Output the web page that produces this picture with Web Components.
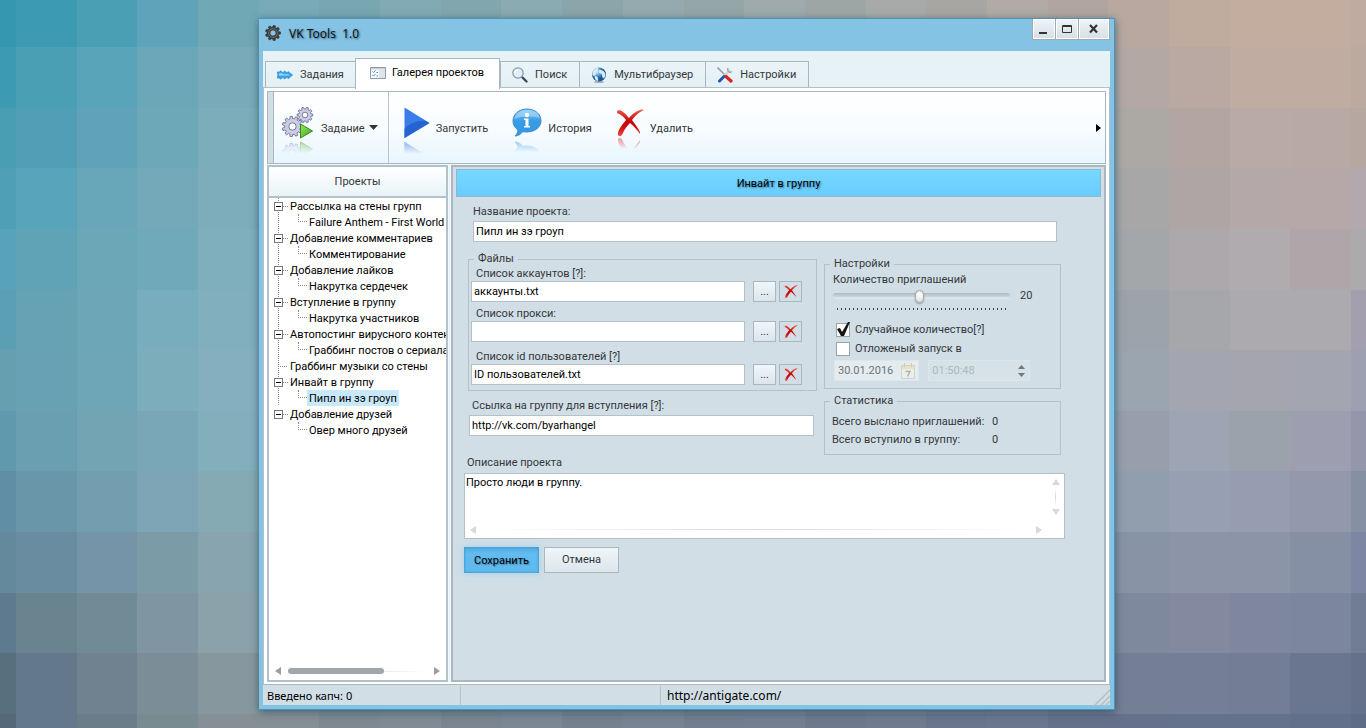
<!DOCTYPE html>
<html lang="ru">
<head>
<meta charset="utf-8">
<title>VK Tools 1.0</title>
<style>
  html, body { margin: 0; height: 100%; }
  body {
    font: 11px/16px Roboto, "Liberation Sans", sans-serif;
    color: #34373a;
    background: #6f8c98;
  }
</style>
</head>
<body>
<desk-top>
  <app-window heading="VK Tools&nbsp; 1.0">
    <tab-bar slot="tabs">
      <tab-item icon="arrows">Задания</tab-item>
      <tab-item icon="list" active>Галерея проектов</tab-item>
      <tab-item icon="lens">Поиск</tab-item>
      <tab-item icon="globe">Мультибраузер</tab-item>
      <tab-item icon="tools">Настройки</tab-item>
    </tab-bar>
    <tool-bar>
      <tool-button icon="gears" menu>Задание</tool-button>
      <tool-button icon="play">Запустить</tool-button>
      <tool-button icon="info">История</tool-button>
      <tool-button icon="cross">Удалить</tool-button>
    </tool-bar>
    <split-view>
      <project-tree slot="side"></project-tree>
      <project-form></project-form>
    </split-view>
    <status-bar slot="status"></status-bar>
  </app-window>
</desk-top>

<script>
const define = (name, html, setup) => {
  const template = document.createElement('template');
  template.innerHTML = html;
  customElements.define(name, class extends HTMLElement {
    constructor() {
      super();
      this.attachShadow({ mode: 'open' }).append(template.content.cloneNode(true));
    }
    connectedCallback() {
      if (setup && !this.ready) { this.ready = true; setup(this, this.shadowRoot); }
    }
  });
};

/* ---------- icons ---------- */
const gearPath = (cx, cy, r, n, hole = .36) => {
  let d = '';
  for (let i = 0; i < n; i++) {
    const a = i * 2 * Math.PI / n, s = Math.PI / n;
    [[-.62, .78], [-.4, 1], [.4, 1], [.62, .78]].forEach(([k, m], j) => {
      d += (i + j ? 'L' : 'M') + (cx + r * m * Math.cos(a + k * s)).toFixed(2) + ' ' + (cy + r * m * Math.sin(a + k * s)).toFixed(2);
    });
  }
  const h = r * hole;
  return d + `ZM${cx - h} ${cy}a${h} ${h} 0 1 0 ${2 * h} 0a${h} ${h} 0 1 0 ${-2 * h} 0Z`;
};
const icons = {
  gear: ['0 0 16 16', `<path fill="#3e3e3e" stroke="#2c2c2c" stroke-width=".6" fill-rule="evenodd" d="${gearPath(8, 8, 7.6, 9, .4)}"/><circle cx="8" cy="8" r="4.400" fill="none" stroke="#6d6d6d"/>`],
  arrows: ['0 0 16 10', `<path fill="#3ba4e6" stroke="#1f86cc" stroke-width=".6" d="M0 2h3V.8L7 3V1l4 2V1.600L15.700 5 11 8.800V7L7 9V7L3 9.200V8H0l1-3Z"/><path fill="#8fdcff" d="M2 3.200h3l2 1.300 3-.5 3 1-3 .6H2Z"/>`],
  list: ['0 0 16 12', `<path fill="#f6f9fb" stroke="#8f9ba3" d="M.5.5h15v11H.5Z"/><path fill="#c5d0d8" d="M1 1h14v1.500H1Z"/><path fill="#dde5eb" d="M9 3h6v8H9Z"/><path stroke="#3d92c8" fill="none" d="M2.500 4.500l1 1 2-2M2.500 8l1 1 2-2M6.500 5.500h1.500M6.500 9h1.500"/>`],
  lens: ['0 0 16 16', `<path stroke="#3d4a55" stroke-width="2.400" stroke-linecap="round" d="M10.500 10.500l4 4"/><circle cx="6" cy="6" r="5.200" fill="#dfeefa" stroke="#8a97a6" stroke-width="1.200"/><path d="M3 6a3 3 0 0 1 3-3" stroke="#fff" stroke-width="1.500" fill="none"/>`],
  globe: ['0 0 16 16', `<defs><radialGradient id="g" cx=".35" cy=".3"><stop offset="0" stop-color="#d8f2ff"/><stop offset=".5" stop-color="#55abe0"/><stop offset="1" stop-color="#16599c"/></radialGradient></defs><ellipse cx="8" cy="15" rx="5" ry="1" fill="#aab"/><circle cx="8" cy="7.500" r="7" fill="url(#g)"/><path fill="#dfe7ea" d="M1.500 5c1-2 3-4 5.500-4 1 2-1 3-2 4s1 2-1 3.500-3-1.500-2.500-3.500ZM9 3c2 0 4 1 5 3s0 4-1 5-2-1-2-3-3-1-3-3 0-2 1-2ZM4 9c2 0 4 2 3 5-2 0-4-3-3-5Z"/>`],
  tools: ['0 0 16 16', `<path stroke="#97a0a8" stroke-width="1.600" fill="none" d="M.5.5l8 8"/><path stroke="#cfd6dc" stroke-width="2.400" d="M13 2.500L7.500 9"/><path fill="none" stroke="#9aa4ac" stroke-width="1.300" d="M11 1c-1 2 0 4 2 4.500l2-1"/><path stroke="#1d56b8" stroke-width="3" stroke-linecap="round" d="M7 9.500l-4.500 4.500"/><path stroke="#d8261c" stroke-width="3.200" stroke-linecap="round" d="M9 9.500l5 4.500"/>`],
  gears: ['0 0 32 32', `<g stroke="#6d7192" stroke-width=".9" fill="#c9cce2" fill-rule="evenodd"><path d="${gearPath(23, 8, 7.800, 10)}"/><path d="${gearPath(10.500, 19.500, 10.200, 11)}"/></g><defs><linearGradient id="p" x1="0" y1="0" x2="1" y2="1"><stop offset="0" stop-color="#9be85e"/><stop offset="1" stop-color="#2fa81c"/></linearGradient></defs><path fill="url(#p)" stroke="#37891f" d="M18.500 17v14L30.500 24Z"/>`],
  play: ['0 0 26 32', `<path fill="#3b7de8" d="M.5.5V31L25.500 16Z"/><path fill="#2563cf" d="M.5 31V22C6 16 14 13 22 14l3.500 2Z"/>`],
  info: ['0 0 30 30', `<defs><linearGradient id="i" x1="0" y1="0" x2="0" y2="1"><stop offset="0" stop-color="#86c8f4"/><stop offset=".45" stop-color="#3b9be4"/><stop offset="1" stop-color="#2c9ae8"/></linearGradient></defs><path fill="url(#i)" stroke="#3f8dcb" d="M15 1c8 0 14 5 14 12 0 6-6 11-14 11-2 0-3 0-4-.500C9 26 6 28 3 28c2-2 3-4 3-6-3-2-5-5-5-9C1 6 7 1 15 1Z"/><path fill="#a8daf9" opacity=".65" d="M15 2c7 0 12 3 12.500 8-6-2-18-2-25 1C3 6 8 2 15 2Z"/><circle cx="15" cy="7" r="2.200" fill="#fff"/><path fill="#fff" d="M12 10.500h4.500V18H18v1.500h-6V18h1.500v-6H12Z"/>`],
  cross: ['0 0 28 27', `<defs><linearGradient id="r" x1="0" y1="0" x2="0" y2="1"><stop offset="0" stop-color="#f0564a"/><stop offset=".45" stop-color="#c80808"/><stop offset=".7" stop-color="#d01010"/><stop offset="1" stop-color="#f04a3c"/></linearGradient></defs>
    <path fill="url(#r)" d="M1 2.500C2 .5 5 1 7 3c3 2 4 4 6 6 3-4 8-7.500 13-8.500l2 .5c-5 2-9 6-12 10 3 4 6 8 8 12l0 2c-3-4-6-8-10-11-3 3-6 7-7 10-1 4-6 4-5 0 1-5 5-9 8-13C7 7 4 5 1 4Z"/>`],
  calendar: ['0 0 14 16', `<g opacity=".8"><path fill="#eef0e6" stroke="#c6ccc8" d="M.5 2.500h13v13H.5Z"/><path fill="#ecdfae" d="M1 3h12v3H1Z"/><path stroke="#c3c6b8" d="M3.500 0v4M10.500 0v4"/><path fill="none" stroke="#9aa4a9" stroke-width="1.400" d="M4.500 8.500h4.500l-2.500 5"/></g>`]
};
customElements.define('app-icon', class extends HTMLElement {
  constructor() { super(); this.attachShadow({ mode: 'open' }); }
  static get observedAttributes() { return ['name']; }
  attributeChangedCallback() { this.draw(); }
  draw() {
    const icon = icons[this.getAttribute('name')];
    if (!icon) return;
    const [box, art] = icon;
    const [, , w, h] = box.split(' ');
    this.shadowRoot.innerHTML = `<style>:host{display:block;flex:none} svg{display:block}</style>
      <svg viewBox="${box}" width="${this.getAttribute('w') || w}" height="${this.getAttribute('h') || h}" aria-hidden="true">${art}</svg>`;
  }
});

/* ---------- desktop: wallpaper mosaic ---------- */
define('desk-top', `<style>
  :host { display: grid; min-height: 100vh; }
  .mosaic, main { grid-area: 1 / 1; min-width: 0; }
  .mosaic { display: grid; overflow: hidden;
    grid-template-columns: 16px repeat(22, 1fr) 15px;
    grid-template-rows: 47px repeat(11, 1fr) 14px; }
  main { display: grid; z-index: 1; padding: 18px 251px 18px 259px; }
</style>
<div class="mosaic" aria-hidden="true"></div><main><slot></slot></main>`, (host, root) => {
  const left = [
    '3597b0 3c9bb3 4b9fb4 5fa3bb 71a8b6', '3c9ab2 4a9fb4 59a4b9 69a7b9 78aaba',
    '4a9eb4 509fb7 60a3b8 6ca8b8 7cadbb', '4f9fb7 58a4ba 67a7b9 73a9b8 7dacba',
    '58a3bb 60a3b7 6aa7b7 70aaba 7fafbd', '5a9fb3 65a3b4 6ca6b7 78adbd 82afbe',
    '669fb0 67a1b3 6ea6b7 7cadba 85afbe', '6098ad 6a9fb1 73a4b4 79a7b7 83afbd',
    '5f8ea5 6996a8 739eb0 7da5b6 86aab4', '64899c 698ca0 7594a8 7b9ba7 87a4af',
    '5e7a8e 69848f 708b96 7f95a2 8ba2ab', '58707e 63788a 70828f 7b8e97 87979e',
    '54687a 63788a 6b7d88 788b90 858f95'];
  const right = [
    'b8a8a0 c0ab9f c2ad9f c2ad9f bfab9f', 'b3a8a4 b9a9a2 c0aca1 c0aca1 bca99f',
    'aca8a4 b3a5a2 b9aaa7 b9a9a5 b6a7a1', 'a7a7a7 aea5a4 b4a8a8 b6a8a8 b3a8ad',
    'a3a7aa ada8ac afabae b0a6aa adaaae', '9da3ab a6a7ab acaaaf acaaaf a39fae',
    '9aa5af a3a6b0 a5a5b0 a3a5b0 9da0b1', '989eac 9da4b3 9ca2ac 9d9fb0 9497ab',
    '919eae 979fb3 969db1 9398ad 8690a5', '8993a6 8c94a7 8c94a7 8690a5 7d86a3',
    '7f899d 838a9f 7f869f 7d869f 717c95', '747e95 747e96 737d96 6a7690 65718b',
    '65718c 65728c 65728c 63708b 5f6c86'];
  const rgb = h => [0, 2, 4].map(i => parseInt(h.slice(i, i + 2), 16));
  const mosaic = root.querySelector('.mosaic');
  left.forEach((row, y) => {
    const l = row.split(' ').map(rgb), r = right[y].split(' ').map(rgb);
    for (let x = 0; x < 24; x++) {
      const t = (x - 4) / 15;
      const c = x < 5 ? l[x] : x > 18 ? r[x - 19] : l[4].map((v, i) => Math.round(v + (r[0][i] - v) * t + (x % 2 ? 2 : -2)));
      const cell = document.createElement('i');
      cell.style.background = `rgb(${c})`;
      mosaic.append(cell);
    }
  });
});

/* ---------- window frame ---------- */
define('app-window', `<style>
  :host { display: flex; flex-direction: column; min-width: 0; background: #84c3e4;
    border: 1px solid #4c93b5; border-width: 1px 1px 1px 0; box-sizing: border-box;
    box-shadow: 0 2px 8px rgba(30, 70, 90, .7); padding: 0 4px 4px 4px; }
  header { display: flex; align-items: flex-start; height: 32px; }
  app-icon { margin: 6px 8px 0 2px; }
  h1 { flex: 1; margin: 7px 0 0; font: 12px/16px "Noto Sans", "Open Sans", sans-serif; color: #101418;
    text-shadow: 1px 1px 2px rgba(20, 50, 70, .7); }
  nav { display: flex; gap: 1px; background: #9fa9ae; border: 1px solid #9fa9ae; border-top: 0; }
  button { display: grid; place-items: center; width: 22px; height: 20px; padding: 0; border: 1px solid #fff;
    background: linear-gradient(#eef4f7, #d6e0e6); }
  button.close { width: 30px; }
  .body { flex: 1; display: flex; flex-direction: column; min-height: 0; background: #e6f2f6; }
  .page { flex: 1; display: flex; flex-direction: column; min-height: 0;
    background: #fff; border: 1px solid #b3c1c8; border-top: 0; border-bottom-color: #a9b8c0; padding: 3px 3px 2px 3px; }
</style>
<header><app-icon name="gear"></app-icon><h1></h1>
  <nav>
    <button aria-label="Свернуть"><svg width="12" height="12"><path fill="#333" d="M1 9h8v2H1Z"/></svg></button>
    <button aria-label="Развернуть"><svg width="12" height="12"><path fill="none" stroke="#333" d="M1.500 2.500h9v7h-9ZM1 3.500h10"/></svg></button>
    <button class="close" aria-label="Закрыть"><svg width="12" height="12"><path stroke="#333" stroke-width="2.200" d="M2 2l7 7.500M9 2L2 9.500"/></svg></button>
  </nav>
</header>
<div class="body"><slot name="tabs"></slot><div class="page"><slot></slot></div><slot name="status"></slot></div>`,
  (host, root) => { root.querySelector('h1').textContent = host.getAttribute('heading'); });

/* ---------- tabs ---------- */
define('tab-bar', `<style>
  :host { display: flex; align-items: flex-end; height: 36px; padding: 0 2px; border-bottom: 1px solid #b3c1c8; z-index: 1; }
</style><slot></slot>`);
define('tab-item', `<style>
  :host { display: block; }
  button { display: flex; align-items: center; gap: 7px; height: 26px; padding: 0 12px 0 11px; font: inherit; color: #34373a;
    border: 1px solid #a9b8c0; border-bottom: 0; border-right-width: 0; background: linear-gradient(#eaf4f8, #e4f0f5); }
  :host(:first-child) button { padding: 0 11px; }
  :host(:last-child) button { border-right-width: 1px; }
  :host([active]) { position: relative; margin-bottom: -2px; }
  :host([active]) button { height: 31px; padding: 0 15px 3px 14px; gap: 6px; color: #000; background: #fff; border-right-width: 1px; }
</style><button><app-icon></app-icon><slot></slot></button>`,
  (host, root) => root.querySelector('app-icon').setAttribute('name', host.getAttribute('icon')));

/* ---------- toolbar ---------- */
define('tool-bar', `<style>
  :host { display: flex; height: 71px; border: 1px solid #a9b8c0; background: linear-gradient(#fff, #f8fcff 50%, #e8f6fe); }
  .grip { width: 5px; background: #d1dee6; border-right: 1px solid #a9b8c0; }
  .items { flex: 1; display: flex; }
  button { align-self: center; border: 0; background: none; padding: 4px; }
  svg { display: block; }
</style>
<div class="grip"></div><div class="items"><slot></slot></div>
<button aria-label="Ещё"><svg width="5" height="8"><path d="M0 0v8L5 4Z"/></svg></button>`);
define('tool-button', `<style>
  :host { display: flex; }
  :host([menu]) { border-right: 1px solid #b9c6cc; }
  button { display: flex; align-items: center; font: inherit; color: #34373a; border: 0; background: none; padding: 0 10px 0 8px; }
  app-icon { -webkit-box-reflect: below 2px linear-gradient(transparent 60%, rgba(0, 0, 0, .5)); margin-bottom: 10px; }
  :host(:not([menu])) button { padding: 0 9px 0 15px; }
  span { padding: 2px 0 0 7px; }
  :host(:not([menu])) span { padding-left: 6px; }
  .menu { margin: 0 0 0 4px; display: none; }
  :host([menu]) .menu { display: block; }
</style><button><app-icon></app-icon><span><slot></slot></span><svg class="menu" width="9" height="5"><path fill="#333" d="M0 0h9L4.500 5Z"/></svg></button>`,
  (host, root) => root.querySelector('app-icon').setAttribute('name', host.getAttribute('icon')));

/* ---------- two panes ---------- */
define('split-view', `<style>
  :host { flex: 1; display: flex; gap: 3px; min-height: 0; padding-top: 1px; background: #eef7fb; }
  .side { flex: none; display: flex; width: 181px; }
  .main { flex: 1; display: flex; min-width: 0; }
</style><div class="side"><slot name="side"></slot></div><div class="main"><slot></slot></div>`);

define('h-scroll', `<style>
  :host { display: flex; align-items: center; gap: 7px; }
  i { border: 4px solid transparent; }
  .l { border-right: 6px solid #9a9fa1; border-left: 0; }
  .r { border-left: 6px solid #9a9fa1; border-right: 0; }
  .track { flex: 1; height: 1px; background: linear-gradient(90deg, transparent, #d8dcdd, transparent); }
  .thumb { width: 69%; height: 6px; margin-top: -3px; border-radius: 3px; background: #a2a7a9; }
  :host([idle]) i { opacity: .4; }
  :host([idle]) .thumb { display: none; }
</style><i class="l"></i><div class="track"><div class="thumb"></div></div><i class="r"></i>`);

/* ---------- project tree ---------- */
define('project-tree', `<style>
  :host { flex: 1; display: flex; flex-direction: column; min-width: 0; border: 2px solid #b3c1c8; box-sizing: border-box; background: #fff; }
  h2 { margin: 0; font: inherit; text-align: center; line-height: 29px; background: linear-gradient(#fff, #e9f4f8); border-bottom: 2px solid #b3c1c8; }
  ul { list-style: none; margin: 0; padding: 0; }
  .tree { flex: 1; padding: 0 0 0 5px; overflow: hidden; color: #000; white-space: nowrap; }
  .tree > li { background: linear-gradient(#888 50%, transparent 50%) 4px 0 / 1px 2px repeat-y; }
  .tree > li:last-child { background: none; }
  .row { display: flex; align-items: center; height: 16px; }
  .row > * { flex: none; }
  .row button { width: 9px; height: 9px; padding: 0; border: 1px solid #777; background: linear-gradient(#000, #000) center / 5px 1px no-repeat #fff; }
  .row i, .leaf::before { content: ""; flex: none; height: 1px; width: 5px; background: repeating-linear-gradient(90deg, #888 0 1px, transparent 1px 2px); }
  .leaf::before { width: 10px; margin-left: 4px; }
  li li .row::before { content: ""; flex: none; width: 9px; height: 8px; margin: 0 0 8px 24px; box-sizing: border-box; border: dotted #888; border-width: 0 0 1px 1px; }
  a { color: inherit; text-decoration: none; padding: 1px 2px 0; line-height: 15px; }
  a[aria-current] { background: #c8e9fb; }
  h-scroll { height: 16px; padding: 0 6px 1px; }
</style>
<h2>Проекты</h2><ul class="tree"></ul><h-scroll></h-scroll>`, (host, root) => {
  const data = [
    ['Рассылка на стены групп', 'Failure Anthem - First World F'],
    ['Добавление комментариев', 'Комментирование'],
    ['Добавление лайков', 'Накрутка сердечек'],
    ['Вступление в группу', 'Накрутка участников'],
    ['Автопостинг вирусного контен', 'Граббинг постов о сериала'],
    ['Граббинг музыки со стены'],
    ['Инвайт в группу', 'Пипл ин зэ гроуп'],
    ['Добавление друзей', 'Овер много друзей']];
  root.querySelector('.tree').innerHTML = data.map(([name, child]) => child
    ? `<li><div class="row"><button aria-label="Свернуть ветку"></button><i></i><a href="#">${name}</a></div>
       <ul><li><div class="row"><a href="#"${child.startsWith('Пипл') ? ' aria-current="true"' : ''}>${child}</a></div></li></ul></li>`
    : `<li><div class="row leaf"><a href="#">${name}</a></div></li>`).join('');
});

/* ---------- form parts ---------- */
const fieldCss = `
  input { box-sizing: border-box; width: 100%; height: 21px; margin: 0; padding: 0 2px; font: inherit; color: #000; border: 1px solid #b3c1c8; background: #fff; border-radius: 0; }
  label { display: block; line-height: 15px; }`;
define('text-field', `<style>${fieldCss} :host { display: block; } label { margin-bottom: 2px; padding-left: var(--label-indent, 3px); }</style>
<label for="f"></label><input id="f">`, (host, root) => {
  root.querySelector('label').textContent = host.getAttribute('label');
  root.querySelector('input').value = host.getAttribute('value');
});
define('file-field', `<style>${fieldCss}
  :host { display: block; }
  label { padding-left: 5px; }
  div { display: flex; gap: 3px; }
  input { flex: 1; margin-right: 5px; min-width: 0; }
  button { display: grid; place-items: center; box-sizing: border-box; width: 23px; height: 21px; padding: 0; font: inherit; color: #333;
    border: 1px solid #a9b8c0; background: linear-gradient(#f0f7fa, #dbe5ec); }
  button.clear { background: none; }
</style>
<label for="f"></label><div><input id="f"><button aria-label="Обзор">...</button><button class="clear" aria-label="Очистить"><app-icon name="cross" w="14" h="13"></app-icon></button></div>`, (host, root) => {
  root.querySelector('label').textContent = host.getAttribute('label');
  root.querySelector('input').value = host.getAttribute('value');
});
define('group-box', `<style>
  :host { display: block; min-width: 0; }
  fieldset { margin: 0; min-width: 0; box-sizing: border-box; padding: 0; border: 1px solid #b3c1c8; }
  legend { margin-left: 5px; padding: 0 4px; line-height: 14px; }
</style><fieldset><legend></legend><slot></slot></fieldset>`, (host, root) => {
  root.querySelector('legend').textContent = host.getAttribute('label');
});
define('count-slider', `<style>
  :host { display: grid; grid-template-columns: 1fr 44px; padding: 1px 6px 0 8px; }
  label { grid-column: 1 / 3; line-height: 15px; }
  input { appearance: none; width: 100%; height: 18px; margin: 0; background: none; }
  input::-webkit-slider-runnable-track { height: 6px; border-radius: 3px; background: linear-gradient(#adb9bf, #c5d1d7 50%, #e6eef2); }
  input::-webkit-slider-thumb { appearance: none; width: 9px; height: 13px; margin-top: -3px; border-radius: 5px; border: 1px solid #a6aaab; background: radial-gradient(circle at 50% 35%, #fff, #d6d8d8); box-shadow: 0 1px 2px rgba(0,0,0,.3); }
  output { padding-left: 10px; line-height: 17px; }
  .ticks { height: 2px; margin: 3px 2px 1px 4px; background: repeating-linear-gradient(90deg, #444 0 1px, transparent 1px 4px); }
</style><label for="s">Количество приглашений</label><input id="s" type="range" min="0" max="41" value="20"><output for="s">20</output><div class="ticks"></div>`);
define('tick-box', `<style>
  :host { display: flex; align-items: center; height: 19px; padding-left: 11px; }
  input { appearance: none; width: 14px; height: 14px; margin: 0 5px 0 0; border: 1px solid #98a4aa; background: #fff; box-sizing: border-box; flex: none; }
  span { position: relative; display: flex; }
  svg { position: absolute; left: 0; bottom: 0; display: none; pointer-events: none; }
  input:checked + svg { display: block; }
</style><span><input id="c" type="checkbox"><svg width="15" height="15"><path fill="#151515" d="M1 7l3-1 2 4L12 0h2L8 14H5Z"/></svg></span><label for="c"></label>`, (host, root) => {
  root.querySelector('label').textContent = host.getAttribute('label');
  root.querySelector('input').checked = host.hasAttribute('checked');
});
define('start-time', `<style>
  :host { display: flex; gap: 9px; padding: 2px 30px 7px 9px; }
  div { display: flex; align-items: center; box-sizing: border-box; height: 21px; border: 1px solid #dde6eb; background: #d6e1e8; padding: 0 3px; }
  .date { flex: 85; min-width: 0; background: #e4ecf0; } .time { flex: 103; min-width: 0; }
  input { flex: 1; min-width: 0; width: 0; padding: 0; border: 0; background: none; font: inherit; color: #6b7479; }
  .time input { color: #a9bbbb; }
  button { display: grid; gap: 4px; border: 0; padding: 0; background: none; }
  svg { display: block; }
</style>
<div class="date"><input aria-label="Дата запуска" value="30.01.2016" disabled><button aria-label="Календарь" disabled><app-icon name="calendar"></app-icon></button></div>
<div class="time"><input aria-label="Время запуска" value="01:50:48" disabled><button aria-label="Изменить время" disabled><svg width="9" height="14"><path fill="#70787b" d="M1 5h7L4.500 1ZM1 9h7L4.500 13Z"/></svg></button></div>`);
define('stat-list', `<style>
  :host { display: block; padding: 5px 6px 5px 7px; }
  table { border-spacing: 0; } th, td { font-weight: inherit; text-align: left; line-height: 18px; padding: 0; } th { min-width: 160px; }
</style><table><tr><th scope="row">Всего выслано приглашений:</th><td>0</td></tr><tr><th scope="row">Всего вступило в группу:</th><td>0</td></tr></table>`);
define('memo-field', `<style>
  :host { display: block; }
  label { display: block; padding-left: 3px; line-height: 16px; margin-bottom: 2px; }
  .box { display: grid; grid-template: 1fr 17px / 1fr 17px; height: 66px; box-sizing: border-box; border: 1px solid #b3c1c8; background: #fff; }
  textarea { resize: none; border: 0; padding: 1px 1px 0; margin: 0; font: inherit; color: #000; background: none; overflow: hidden; }
  h-scroll { padding: 0 5px; grid-area: 2 / 1; }
  .v { display: flex; flex-direction: column; align-items: center; gap: 3px; padding-top: 5px; opacity: .4; }
  .v i { border: 4px solid transparent; }
  .v .u { border-bottom: 6px solid #9a9fa1; border-top: 0; } .v .d { border-top: 6px solid #9a9fa1; border-bottom: 0; }
  .v b { width: 1px; height: 18px; background: linear-gradient(transparent, #9a9fa1, transparent); }
</style><label for="m">Описание проекта</label>
<div class="box"><textarea id="m">Просто люди в группу.</textarea><div class="v"><i class="u"></i><b></b><i class="d"></i></div><h-scroll idle></h-scroll></div>`);
define('push-button', `<style>
  :host { display: block; }
  button { box-sizing: border-box; width: 75px; height: 26px; padding: 0; font: inherit; color: #34373a; border: 1px solid #a9b8c0; background: linear-gradient(#eef6f9, #dde6ed); }
  :host([primary]) button { color: #000; border: 0; background: linear-gradient(#4fa6dc, #62bcef 25%, #5fb9ec); padding-top: 2px; text-shadow: 1px 1px 1px rgba(20, 70, 110, .5);
    box-shadow: inset 0 0 2px 1px #4a9ed2, 0 0 6px rgba(120, 200, 245, .6); }
</style><button><slot></slot></button>`);

/* ---------- project form ---------- */
define('project-form', `<style>
  :host { flex: 1; min-width: 0; box-sizing: border-box; border: 2px solid #a9b8bd; background: #d1dee6; padding: 2px 3px; }
  h2 { margin: 0; height: 26px; font: inherit; line-height: 28px; text-align: center; color: #000; border: 1px solid #8fb6d3; background: linear-gradient(#76d9ff, #6accfe); text-shadow: 1px 1px 2px rgba(10, 50, 90, .6); }
  form { padding: 7px 36px 0 8px; }
  .name { margin: 0 8px 0 9px; --label-indent: 0px; }
  .columns { display: grid; grid-template-columns: 349fr 237fr; gap: 7px; margin: 10px 4px 0 4px; }
  .columns > div { min-width: 0; }
  .files { padding: 0 14px 5px 2px; display: grid; gap: 4px; }
  .files :last-child { margin-top: 3px; }
  .link { margin: 7px 3px 0 1px; }
  .settings { margin-top: 5px; }
  .stats { margin-top: 5px; }
  .checks { padding-top: 9px; }
  .actions { display: flex; gap: 5px; margin-top: 8px; }
</style>
<h2>Инвайт в группу</h2>
<form>
  <text-field class="name" label="Название проекта:" value="Пипл ин зэ гроуп"></text-field>
  <div class="columns">
    <div>
      <group-box label="Файлы"><div class="files">
        <file-field label="Список аккаунтов [?]:" value="аккаунты.txt"></file-field>
        <file-field label="Список прокси:" value=""></file-field>
        <file-field label="Список id пользователей [?]" value="ID пользователей.txt"></file-field>
      </div></group-box>
      <text-field class="link" label="Ссылка на группу для вступления [?]:" value="http://vk.com/byarhangel"></text-field>
    </div>
    <div>
      <group-box class="settings" label="Настройки">
        <count-slider></count-slider>
        <div class="checks"><tick-box label="Случайное количество[?]" checked></tick-box><tick-box label="Отложеный запуск в"></tick-box></div>
        <start-time></start-time>
      </group-box>
      <group-box class="stats" label="Статистика"><stat-list></stat-list></group-box>
    </div>
  </div>
  <memo-field></memo-field>
  <div class="actions"><push-button primary>Сохранить</push-button><push-button>Отмена</push-button></div>
</form>`);

/* ---------- status bar ---------- */
define('status-bar', `<style>
  :host { display: grid; grid-template-columns: 198px 200px 1fr 20px; height: 20px; background: #d1dee6; color: #000; font: 11px/20px "Noto Sans", "Open Sans", sans-serif; }
  span { padding: 1px 4px 0; margin: 1px 0; line-height: 18px; border-right: 1px solid #b3c1c8; }
  .site { border: 0; padding-left: 6px; font-size: 12px; }
  svg { display: block; align-self: end; justify-self: end; }
</style><span>Введено капч: 0</span><span></span><span class="site">http://antigate.com/</span>
<svg width="17" height="17"><path stroke="#b9bfc0" stroke-width="1.500" fill="none" d="M1 17L17 1M7 17L17 7M12 17l5-5"/></svg>`);
</script>
</body>
</html>
